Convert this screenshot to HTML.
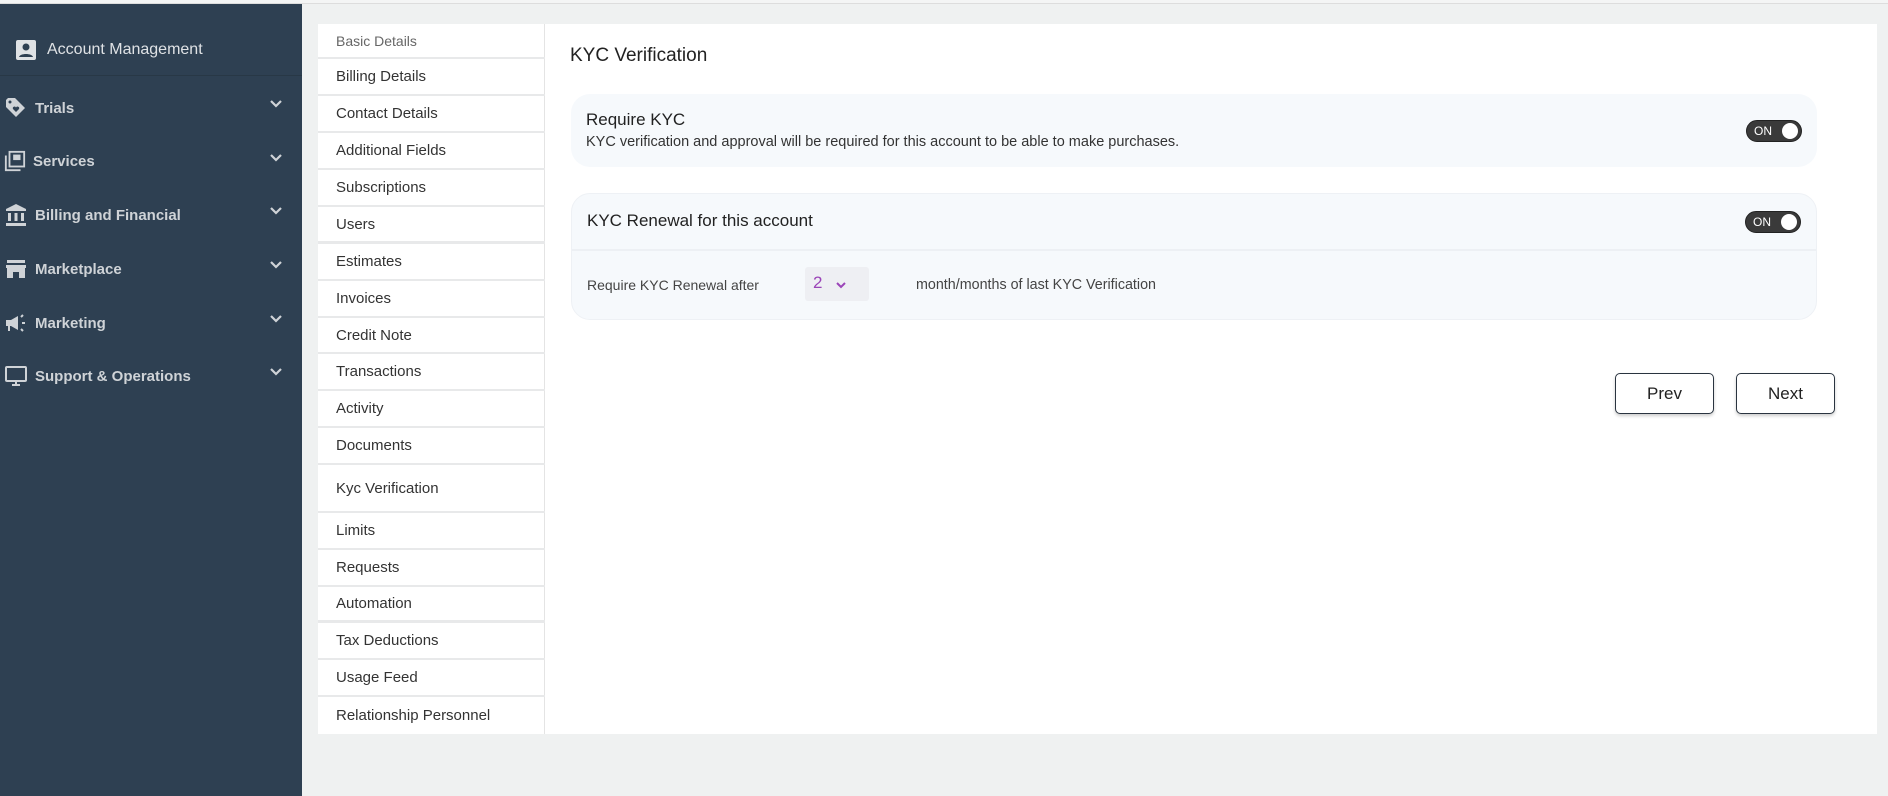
<!DOCTYPE html>
<html><head><meta charset="utf-8"><style>
*{box-sizing:border-box;margin:0;padding:0}
body{width:1888px;height:796px;overflow:hidden;background:#eff1f1;font-family:"Liberation Sans",sans-serif;position:relative}
.sb{position:absolute;left:0;top:4px;width:302px;height:792px;background:#2e4052;color:#d6d9dc}
.topline{position:absolute;left:0;top:0;width:1888px;height:4px;background:#f4f5f5;border-bottom:1px solid #ddd}
.am{position:absolute;left:14px;top:34px;font-size:16px;color:#dfe2e5;display:flex;align-items:center}
.sep{position:absolute;left:0;top:71px;width:302px;height:1px;background:#283846}
.mi{position:absolute;left:4px;font-size:15px;font-weight:bold;color:#cfd3d7;display:flex;align-items:center;width:290px}
.mi svg{margin-right:7px}
.mi .ch{position:absolute;right:3px;top:0px}
.card{position:absolute;left:318px;top:24px;width:1559px;height:710px;background:#fff}
.nav{position:absolute;left:318px;top:24px;width:227px;height:710px;border-right:1px solid #e4e4e4}
.ni{position:absolute;left:0;width:227px;border-bottom:2px solid #e8e9ea;font-size:15px;color:#333;padding-left:18px;display:flex;align-items:center}
.title{position:absolute;left:570px;top:45px;font-size:19px;color:#222}
.box{position:absolute;left:571px;width:1246px;background:#f6f9fc;border-radius:19px}
.tg{position:absolute;width:56px;height:22px;background:#3a3a3a;border-radius:11px;border:1px solid #222}
.tg span{position:absolute;left:7px;top:3px;font-size:12px;color:#fff}
.tg i{position:absolute;right:3px;top:2px;width:16px;height:16px;background:#fff;border-radius:50%}
.btn{position:absolute;top:373px;width:99px;height:41px;border:1px solid #2a3440;border-radius:5px;background:#fff;font-size:17px;color:#222;text-align:center;line-height:39px;box-shadow:0 2px 3px rgba(0,0,0,.2)}
</style></head><body>
<div class="topline"></div>
<div class="sb">
 <div class="am"><svg width="24" height="24" viewBox="0 0 24 24"><rect x="2" y="2" width="20" height="20" rx="2" fill="#dfe2e5"/><circle cx="12" cy="9" r="3.5" fill="#2e4052"/><path d="M5 19c1-4 13-4 14 0z" fill="#2e4052"/></svg><span style="margin-left:9px">Account Management</span></div>
 <div class="sep"></div>
 <div class="mi" style="top:92px"><svg width="24" height="24" viewBox="0 0 24 24"><path d="M2 4v7l10 10 9-9L11 2H4z" fill="#cfd3d7"/><circle cx="6" cy="6" r="1.5" fill="#2e4052"/><path d="M12 16l-3-3a1.6 1.6 0 0 1 3-1.5 1.6 1.6 0 0 1 3 1.5z" fill="#2e4052"/></svg>Trials<svg class="ch" width="16" height="16" viewBox="0 0 16 16"><path d="M3 5l5 5 5-5" stroke="#cfd3d7" stroke-width="2.2" fill="none"/></svg></div>
 <div class="mi" style="top:146px"><svg width="22" height="22" viewBox="0 0 24 24"><path d="M2 6v16h16" stroke="#cfd3d7" stroke-width="2" fill="none"/><rect x="6" y="2" width="16" height="16" stroke="#cfd3d7" stroke-width="2" fill="none"/><rect x="10" y="5" width="8" height="6" fill="#cfd3d7"/></svg>Services<svg class="ch" width="16" height="16" viewBox="0 0 16 16"><path d="M3 5l5 5 5-5" stroke="#cfd3d7" stroke-width="2.2" fill="none"/></svg></div>
 <div class="mi" style="top:199px"><svg width="24" height="24" viewBox="0 0 24 24"><path d="M12 1L2 6v2h20V6z" fill="#cfd3d7"/><rect x="4" y="10" width="3" height="8" fill="#cfd3d7"/><rect x="10.5" y="10" width="3" height="8" fill="#cfd3d7"/><rect x="17" y="10" width="3" height="8" fill="#cfd3d7"/><rect x="2" y="20" width="20" height="3" fill="#cfd3d7"/></svg>Billing and Financial<svg class="ch" width="16" height="16" viewBox="0 0 16 16"><path d="M3 5l5 5 5-5" stroke="#cfd3d7" stroke-width="2.2" fill="none"/></svg></div>
 <div class="mi" style="top:253px"><svg width="24" height="24" viewBox="0 0 24 24"><rect x="3" y="3" width="18" height="3" fill="#cfd3d7"/><path d="M2 8h20v3H2z" fill="#cfd3d7"/><path d="M3 11h18v10h-6v-6H9v6H3z" fill="#cfd3d7"/></svg>Marketplace<svg class="ch" width="16" height="16" viewBox="0 0 16 16"><path d="M3 5l5 5 5-5" stroke="#cfd3d7" stroke-width="2.2" fill="none"/></svg></div>
 <div class="mi" style="top:307px"><svg width="24" height="24" viewBox="0 0 24 24"><path d="M2 9h5l7-4v14l-7-4H6v5H4v-5H2z" fill="#cfd3d7"/><path d="M17 6l2-2M18 12h3M17 18l2 2" stroke="#cfd3d7" stroke-width="2"/></svg>Marketing<svg class="ch" width="16" height="16" viewBox="0 0 16 16"><path d="M3 5l5 5 5-5" stroke="#cfd3d7" stroke-width="2.2" fill="none"/></svg></div>
 <div class="mi" style="top:360px"><svg width="24" height="24" viewBox="0 0 24 24"><rect x="2" y="3" width="20" height="14" rx="1" stroke="#cfd3d7" stroke-width="2" fill="none"/><path d="M8 21h8M12 17v4" stroke="#cfd3d7" stroke-width="2"/></svg>Support &amp; Operations<svg class="ch" width="16" height="16" viewBox="0 0 16 16"><path d="M3 5l5 5 5-5" stroke="#cfd3d7" stroke-width="2.2" fill="none"/></svg></div>
</div>
<div class="card"></div>
<div class="nav">
 <div class="ni" style="top:0;height:35px;font-size:14px;color:#666">Basic Details</div>
 <div class="ni" style="top:35px;height:37px">Billing Details</div>
 <div class="ni" style="top:72px;height:37px">Contact Details</div>
 <div class="ni" style="top:109px;height:37px">Additional Fields</div>
 <div class="ni" style="top:146px;height:37px">Subscriptions</div>
 <div class="ni" style="top:183px;height:37px;border-bottom-width:3px">Users</div>
 <div class="ni" style="top:220px;height:37px">Estimates</div>
 <div class="ni" style="top:257px;height:37px">Invoices</div>
 <div class="ni" style="top:294px;height:36px">Credit Note</div>
 <div class="ni" style="top:330px;height:37px">Transactions</div>
 <div class="ni" style="top:367px;height:37px">Activity</div>
 <div class="ni" style="top:404px;height:37px">Documents</div>
 <div class="ni" style="top:441px;height:48px">Kyc Verification</div>
 <div class="ni" style="top:489px;height:37px">Limits</div>
 <div class="ni" style="top:526px;height:37px">Requests</div>
 <div class="ni" style="top:563px;height:36px;border-bottom-width:3px">Automation</div>
 <div class="ni" style="top:599px;height:37px">Tax Deductions</div>
 <div class="ni" style="top:636px;height:37px">Usage Feed</div>
 <div class="ni" style="top:673px;height:37px;border-bottom:none">Relationship Personnel</div>
</div>
<div class="title">KYC Verification</div>
<div class="box" style="top:94px;height:73px">
 <div style="position:absolute;left:15px;top:16px;font-size:17px;color:#222">Require KYC</div>
 <div style="position:absolute;left:15px;top:40px;font-size:14.5px;color:#333">KYC verification and approval will be required for this account to be able to make purchases.</div>
 <div class="tg" style="left:1175px;top:26px"><span>ON</span><i></i></div>
</div>
<div class="box" style="top:193px;height:127px;border:1px solid #eef1f5">
 <div style="position:absolute;left:15px;top:17px;font-size:17px;color:#222">KYC Renewal for this account</div>
 <div class="tg" style="left:1173px;top:17px"><span>ON</span><i></i></div>
 <div style="position:absolute;left:0;top:55px;width:100%;height:2px;background:#edf0f4"></div>
 <div style="position:absolute;left:15px;top:83px;font-size:14px;color:#444">Require KYC Renewal after</div>
 <div style="position:absolute;left:233px;top:73px;width:64px;height:34px;background:#eeeff3;border-radius:3px">
  <span style="position:absolute;left:8px;top:6px;font-size:17px;color:#9b45b8">2</span>
  <svg style="position:absolute;left:30px;top:13px" width="12" height="10" viewBox="0 0 12 10"><path d="M2 3l4 4 4-4" stroke="#9b45b8" stroke-width="2" fill="none"/></svg>
 </div>
 <div style="position:absolute;left:344px;top:83px;font-size:14.3px;color:#444">month/months of last KYC Verification</div>
</div>
<div class="btn" style="left:1615px">Prev</div>
<div class="btn" style="left:1736px">Next</div>
</body></html>
